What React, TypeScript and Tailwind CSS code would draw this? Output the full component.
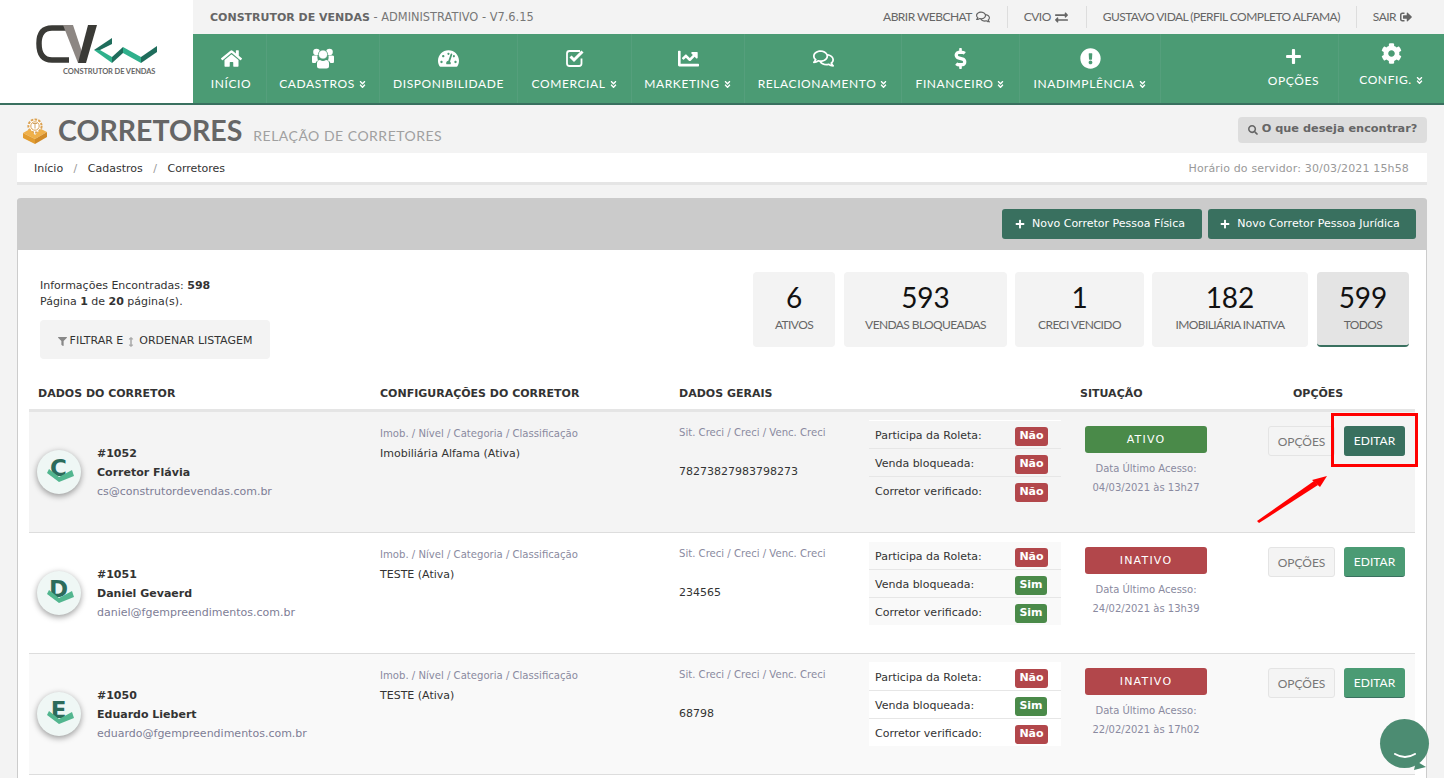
import React from "react";
import {
  FaHome, FaTachometerAlt, FaChartLine, FaRegComments, FaDollarSign,
  FaExclamationCircle, FaPlus, FaCog, FaAngleDoubleDown, FaExchangeAlt, FaSignOutAlt, FaSearch, FaFilter, FaArrowsAltV,
} from "react-icons/fa";

const V = "font-['DejaVu_Sans',Verdana,sans-serif]";
const L = "font-['Lato',sans-serif]";

function Chev() {
  return <FaAngleDoubleDown className="inline-block ml-[3px] text-[9px] align-[-0.5px]" />;
}

function UsersIcon() {
  return (
    <svg width="24" height="22" viewBox="0 0 24 22" fill="currentColor">
      <circle cx="5.5" cy="5" r="3.3" />
      <circle cx="18.5" cy="5" r="3.3" />
      <path d="M1 9.5 Q1 8.6 3 8.6 H6.5 Q6 12 7 13.6 Q5 14.6 4.6 16 H2 Q1 16 1 14.5 Z" />
      <path d="M23 9.5 Q23 8.6 21 8.6 H17.5 Q18 12 17 13.6 Q19 14.6 19.4 16 H22 Q23 16 23 14.5 Z" />
      <circle cx="12" cy="7.5" r="4.6" stroke="#4b9b74" strokeWidth="0.8" />
      <path d="M6 16.5 Q6 13.2 9 13 Q12 15 15 13 Q18 13.2 18 16.5 V19.5 Q18 21.5 15.5 21.5 H8.5 Q6 21.5 6 19.5 Z" />
    </svg>
  );
}

function CheckSquareIcon() {
  return (
    <svg width="20" height="20" viewBox="0 0 20 20" fill="none">
      <path d="M16.5 10.5 V15.5 Q16.5 18 14 18 H4.5 Q2 18 2 15.5 V5.5 Q2 3 4.5 3 H15" stroke="currentColor" strokeWidth="1.8" />
      <path d="M5.5 8.5 L9 12 L17.5 3.5" stroke="currentColor" strokeWidth="3" />
    </svg>
  );
}

const nav = [
  { w: "w-[74px] pl-[3px]", icon: <FaHome />, label: "INÍCIO", chev: false },
  { w: "w-[113px]", icon: <UsersIcon />, label: "CADASTROS", chev: true },
  { w: "w-[138px]", icon: <FaTachometerAlt />, label: "DISPONIBILIDADE", chev: false },
  { w: "w-[114px]", icon: <CheckSquareIcon />, label: "COMERCIAL", chev: true },
  { w: "w-[113px]", icon: <FaChartLine />, label: "MARKETING", chev: true },
  { w: "w-[157px]", icon: <FaRegComments />, label: "RELACIONAMENTO", chev: true },
  { w: "w-[118px]", icon: <FaDollarSign />, label: "FINANCEIRO", chev: true },
  { w: "w-[141px]", icon: <FaExclamationCircle />, label: "INADIMPLÊNCIA", chev: true },
];

function Logo() {
  return (
    <div className="w-[193px] h-[103px] bg-white shrink-0 flex flex-col items-start pt-[25px] pl-[36px]">
      <svg width="122" height="38" viewBox="0 0 122 38">
        <path d="M31 3 H16 Q3 3 3 18.5 Q3 35 16 35 H33" fill="none" stroke="#3a3a36" strokeWidth="5.5" />
        <path d="M27 0 H37 L47 30 L42 38 Z" fill="#8d8783" />
        <path d="M52 0 H61 L50 38 H42 Z" fill="#3a3a36" />
        <path d="M58 25 L64 25 L76 32 V38 Z" fill="#2fb08c" />
        <path d="M58 25 L76 13 V19 L64 25 Z" fill="#1f6d5c" />
        <path d="M76 32 L87 22 V28 L76 38 Z" fill="#1f6d5c" />
        <path d="M87 22 L105 32 V38 L87 28 Z" fill="#2fb08c" />
        <path d="M105 32 L121 21 V27 L105 38 Z" fill="#1f6d5c" />
      </svg>
      <div className={`${L} text-[7.5px] font-bold text-[#666] mt-[4px] ml-[27px] leading-[10px] tracking-[-0.1px] whitespace-nowrap`}>CONSTRUTOR DE VENDAS</div>
    </div>
  );
}

function Header() {
  return (
    <header className="flex h-[105px] border-b-[2px] border-[#39705f] bg-[#f3f3f3]">
      <Logo />
      <div className="flex-1 flex flex-col min-w-0">
        <div className="h-[34px] flex items-center justify-between pl-[17px] pr-[32px] text-[#666]">
          <div className={`${V} text-[11.4px] pt-[1px] text-[#777] whitespace-nowrap`}>
            <span className="font-bold text-[11px] text-[#666]">CONSTRUTOR DE VENDAS</span> - ADMINISTRATIVO - V7.6.15
          </div>
          <div className={`${L} flex items-center text-[12px] tracking-[-0.55px]`}>
            <span className="flex items-center gap-1 pr-[17px] border-r border-[#ddd] h-[22px]">ABRIR WEBCHAT <FaRegComments className="text-[14px]" /></span>
            <span className="flex items-center gap-1 pl-[16px] pr-[18px] border-r border-[#ddd] h-[22px]">CVIO <FaExchangeAlt className="text-[13px]" /></span>
            <span className="flex items-center px-[16px] border-r border-[#ddd] h-[22px]">GUSTAVO VIDAL (PERFIL COMPLETO ALFAMA)</span>
            <span className="flex items-center gap-1 pl-[16px] h-[22px]">SAIR <FaSignOutAlt className="text-[12px]" /></span>
          </div>
        </div>
        <nav className={`${L} h-[69px] bg-[#4b9b74] flex text-white`}>
          {nav.map((n) => (
            <div key={n.label} className={`${n.w} shrink-0 flex flex-col items-center border-r border-[#559f7c] pt-[12px]`}>
              <div className="h-[24px] flex items-center text-[21px]">{n.icon}</div>
              <div className="mt-[4px] text-[12px] tracking-[0.6px] leading-[20px] whitespace-nowrap">
                {n.label}
                {n.chev && <Chev />}
              </div>
            </div>
          ))}
          <div className="flex-1 border-r border-[#559f7c] flex flex-col items-center pt-[12px] pl-[88px]">
            <FaPlus className="text-[17px] mt-[2px]" />
            <div className="mt-[6px] text-[12px] tracking-[0.6px] leading-[20px]">OPÇÕES</div>
          </div>
          <div className="w-[105px] flex flex-col items-center pt-[9px]">
            <FaCog className="text-[21px]" />
            <div className="mt-[6px] text-[12px] tracking-[0.6px] leading-[20px] whitespace-nowrap">CONFIG.<Chev /></div>
          </div>
        </nav>
      </div>
    </header>
  );
}

function PageIcon() {
  return (
    <svg width="26" height="26" viewBox="0 0 26 26" className="mt-[4px]">
      <circle cx="13" cy="8" r="6.6" fill="#fff" stroke="#dca252" strokeWidth="2" strokeDasharray="2.6 1.2" />
      <circle cx="13" cy="8" r="4.2" fill="#fff" stroke="#dca252" strokeWidth="1" />
      <path d="M11 5.5 H15 M13 5.5 V10.5" stroke="#c99a55" strokeWidth="0.9" fill="none" />
      <path d="M1 15 L8 11 L13 17 L19 11 L25 14 L13 21 Z" fill="#efb04a" />
      <path d="M1 15 L13 21 V26 L1 20 Z" fill="#e29c30" />
      <path d="M25 14 L13 21 V26 L25 19 Z" fill="#d08a28" />
    </svg>
  );
}

function Stat({ n, label, w, active, extra }: { n: string; label: string; w: string; active?: boolean; extra?: string }) {
  return (
    <div className={`${w} ${extra ?? ""} h-[75px] rounded-[4px] flex flex-col items-center shrink-0 ${active ? "bg-[#e4e4e4] border-b-2 border-[#39705f]" : "bg-[#f3f3f3]"}`}>
      <div className={`${L} text-[28px] leading-[36px] mt-[7px] text-[#111]`}>{n}</div>
      <div className={`${L} text-[12px] leading-[16px] mt-[2px] text-[#666] tracking-[-0.6px] whitespace-nowrap`}>{label}</div>
    </div>
  );
}

function Badge({ yes }: { yes: boolean }) {
  return (
    <span className={`${V} inline-flex items-center justify-center h-[19px] rounded-[3px] text-white font-bold text-[11px] ${yes ? "w-[32px] bg-[#4a8a49]" : "w-[33px] bg-[#b2474b]"}`}>
      {yes ? "Sim" : "Não"}
    </span>
  );
}

function Avatar({ letter }: { letter: string }) {
  return (
    <div className="relative w-[44px] h-[44px] rounded-full bg-[#eff7f5] shadow-[0_2px_6px_rgba(0,0,0,0.4)] shrink-0 overflow-hidden flex items-center justify-center">
      <span className={`${V} font-bold text-[23px] leading-none text-[#2c6b5b] -mt-[7px] ml-[-1px]`}>{letter}</span>
      <svg width="44" height="44" viewBox="0 0 44 44" className="absolute left-0 top-0">
        <path d="M12 19 L10 23 L22 32 L37 26 L35 20 L22 27 Z" fill="#52b68f" />
      </svg>
    </div>
  );
}

type Row = {
  id: string; name: string; email: string; imob: string; creci: string;
  flags: [boolean, boolean, boolean]; active: boolean; date: string; bg: string; letter: string; flagBg: string; highlight?: boolean;
};

const rows: Row[] = [
  { id: "#1052", name: "Corretor Flávia", email: "cs@construtordevendas.com.br", imob: "Imobiliária Alfama (Ativa)", creci: "78273827983798273", flags: [false, false, false], active: true, date: "04/03/2021 às 13h27", bg: "bg-[#f4f4f4]", letter: "C", flagBg: "bg-transparent", highlight: true },
  { id: "#1051", name: "Daniel Gevaerd", email: "daniel@fgempreendimentos.com.br", imob: "TESTE (Ativa)", creci: "234565", flags: [false, true, true], active: false, date: "24/02/2021 às 13h39", bg: "bg-white", letter: "D", flagBg: "bg-[#f9f9f9]" },
  { id: "#1050", name: "Eduardo Liebert", email: "eduardo@fgempreendimentos.com.br", imob: "TESTE (Ativa)", creci: "68798", flags: [false, true, false], active: false, date: "22/02/2021 às 17h02", bg: "bg-[#f9f9f9]", letter: "E", flagBg: "bg-white" },
];

const flagLabels = ["Participa da Roleta:", "Venda bloqueada:", "Corretor verificado:"];

function TableRow({ r }: { r: Row }) {
  return (
    <div className={`${r.bg} ${V} h-[121px] border-b border-[#ddd] flex relative shrink-0`}>
      <div className="w-[351px] shrink-0 flex items-start pl-[8px] pt-[38px]">
        <Avatar letter={r.letter} />
        <div className="ml-[16px] -mt-[6px]">
          <div className="text-[11px] font-bold leading-[19px] text-[#333]">{r.id}</div>
          <div className="text-[11px] font-bold leading-[19px] text-[#333]">{r.name}</div>
          <div className="text-[11px] leading-[19px] text-[#7d7d95]">{r.email}</div>
        </div>
      </div>
      <div className="w-[299px] shrink-0 pt-[15px]">
        <div className="text-[10.1px] leading-[14px] text-[#8a8aa0] whitespace-nowrap">Imob. / Nível / Categoria / Classificação</div>
        <div className="text-[11px] leading-[14px] mt-[6px] text-[#333]">{r.imob}</div>
      </div>
      <div className="w-[190px] shrink-0 pt-[14px]">
        <div className="text-[10.1px] leading-[14px] text-[#8a8aa0] whitespace-nowrap">Sit. Creci / Creci / Venc. Creci</div>
        <div className="text-[11px] leading-[14px] mt-[25px] text-[#333]">{r.creci}</div>
      </div>
      <div className="w-[192px] shrink-0 pt-[8px]">
        {r.flags.map((y, i) => (
          <div key={i} className={`${r.flagBg} h-[28px] flex items-center justify-between pl-[6px] pr-[13px] pt-[4px] border-t border-[#e6e6e6] first:border-t-white`}>
            <span className="text-[11px] text-[#333]">{flagLabels[i]}</span>
            <span className="w-[33px] flex"><Badge yes={y} /></span>
          </div>
        ))}
      </div>
      <div className="w-[207px] shrink-0 pl-[24px] pt-[14px]">
        <div className={`w-[122px] h-[27px] rounded-[3px] flex items-center justify-center pt-[1px] text-white text-[11px] tracking-[1.2px] ${r.active ? "bg-[#4a8a49]" : "bg-[#b2474b]"}`}>
          {r.active ? "ATIVO" : "INATIVO"}
        </div>
        <div className="w-[122px] text-center text-[10px] leading-[19px] mt-[6px] text-[#8a8aa0] whitespace-nowrap">
          <div>Data Último Acesso:</div>
          <div>{r.date}</div>
        </div>
      </div>
      <div className="flex-1 pt-[14px] flex items-start pr-[10px] justify-end gap-[9px]">
        <button className={`${L} w-[67px] h-[30px] pt-[1px] rounded-[3px] bg-[#f4f4f4] border border-[#e4e4e4] text-[#777] text-[12px]`}>OPÇÕES</button>
        <button className={`${L} w-[61px] h-[30px] pt-[1px] rounded-[3px] text-white text-[12px] ${r.highlight ? "bg-[#39705f]" : "bg-[#4b9b74]"} border-b border-[#39705f]`}>EDITAR</button>
      </div>
      {r.highlight && (
        <>
          <div className="absolute left-[1302px] top-[1px] w-[87px] h-[54px] border-[3px] border-[#f00]" />
          <svg className="absolute left-[1225px] top-[60px]" width="75" height="55" viewBox="0 0 75 55">
            <path d="M3 49 L5 51 L64 13 L60 9 Z" fill="#f00" />
            <path d="M73 4 L58 8 L66 15 Z" fill="#f00" />
          </svg>
        </>
      )}
    </div>
  );
}

export default function App() {
  return (
    <div className={`${V} relative w-full h-[778px] overflow-hidden bg-[#f3f3f3]`}>
      <Header />
      <div className="px-[17px]">
        <div className="flex items-center justify-between h-[48px] pl-[5px]">
          <div className="flex items-center">
            <PageIcon />
            <span className={`${L} font-bold text-[28.5px] text-[#666] ml-[10px] mt-[2px]`}>CORRETORES</span>
            <span className={`${L} text-[14px] text-[#a0a0a0] ml-[11px] mt-[12px] tracking-[0.5px]`}>RELAÇÃO DE CORRETORES</span>
          </div>
          <div className="h-[26px] w-[189px] bg-[#ddd] rounded-[4px] flex items-center justify-center text-[11.3px] font-bold text-[#666] gap-[4px] mt-[1px]">
            <FaSearch className="text-[10px]" /> O que deseja encontrar?
          </div>
        </div>
        <div className="h-[32px] bg-white border-b-[3px] border-[#e5e5e5] flex items-center justify-between pl-[17px] pr-[18px] pt-[4px] text-[11px]">
          <div className="text-[#333]">
            Início <span className="text-[#999] mx-[7px]">/</span> Cadastros <span className="text-[#999] mx-[7px]">/</span> Corretores
          </div>
          <div className="text-[#999] text-[11px] tracking-[0.15px]">Horário do servidor: 30/03/2021 15h58</div>
        </div>
        <div className="mt-[13px] rounded-t-[4px] border-x border-[#ccc] bg-white h-[600px] flex flex-col">
          <div className="h-[52px] -mx-px bg-[#cbcbcb] rounded-t-[4px] flex items-center justify-end gap-[6px] pr-[11px] shrink-0">
            {["Novo Corretor Pessoa Física", "Novo Corretor Pessoa Jurídica"].map((t, i) => (
              <div key={t} className={`${i ? "w-[208px]" : "w-[200px]"} h-[30px] bg-[#39705f] rounded-[3px] text-white text-[11px] flex items-center justify-center gap-[7px] pr-[4px] whitespace-nowrap`}>
                <FaPlus className="text-[10px]" /> {t}
              </div>
            ))}
          </div>
          <div className="flex justify-between pl-[22px] pr-[17px] pt-[22px] shrink-0 h-[124px]">
            <div>
              <div className="text-[11px] leading-[16px] text-[#333] pt-[6px]">
                <div>Informações Encontradas: <b>598</b></div>
                <div>Página <b>1</b> de <b>20</b> página(s).</div>
              </div>
              <div className="mt-[10px] w-[230px] h-[39px] rounded-[4px] bg-[#f3f3f3] flex items-center justify-center pt-[4px] text-[11px] text-[#333] gap-[3px] whitespace-nowrap">
                <FaFilter className="text-[9px] text-[#888]" /> FILTRAR E <FaArrowsAltV className="text-[10px] text-[#aaa]" /> ORDENAR LISTAGEM
              </div>
            </div>
            <div className="flex gap-[8px] items-start">
              <Stat n="6" label="ATIVOS" w="w-[82px]" />
              <Stat n="593" label="VENDAS BLOQUEADAS" w="w-[163px]" extra="ml-[1px]" />
              <Stat n="1" label="CRECI VENCIDO" w="w-[129px]" />
              <Stat n="182" label="IMOBILIÁRIA INATIVA" w="w-[156px]" />
              <Stat n="599" label="TODOS" w="w-[92px]" extra="ml-[1px]" active />
            </div>
          </div>
          <div className="mx-[11px] flex flex-col">
            <div className="h-[38px] border-b-[3px] border-[#e5e5e5] flex items-center pt-[6px] text-[11px] font-bold text-[#333] shrink-0">
              <div className="w-[351px] pl-[9px]">DADOS DO CORRETOR</div>
              <div className="w-[299px]">CONFIGURAÇÕES DO CORRETOR</div>
              <div className="w-[401px]">DADOS GERAIS</div>
              <div className="w-[213px]">SITUAÇÃO</div>
              <div>OPÇÕES</div>
            </div>
            {rows.map((r) => <TableRow key={r.id} r={r} />)}
          </div>
        </div>
      </div>
      <div className="absolute left-[1380px] top-[719px] w-[49px] h-[49px] rounded-full bg-[#4c8c72] flex items-center justify-center">
        <svg width="22" height="8" viewBox="0 0 22 8" className="mt-[27px]">
          <path d="M1 1 Q11 7 21 1" fill="none" stroke="#fff" strokeWidth="2" strokeLinecap="round" />
        </svg>
        <svg width="12" height="9" viewBox="0 0 12 9" className="absolute left-[34px] top-[42px]">
          <path d="M2 0 L12 6 L0 9 Z" fill="#4c8c72" />
        </svg>
      </div>
    </div>
  );
}
